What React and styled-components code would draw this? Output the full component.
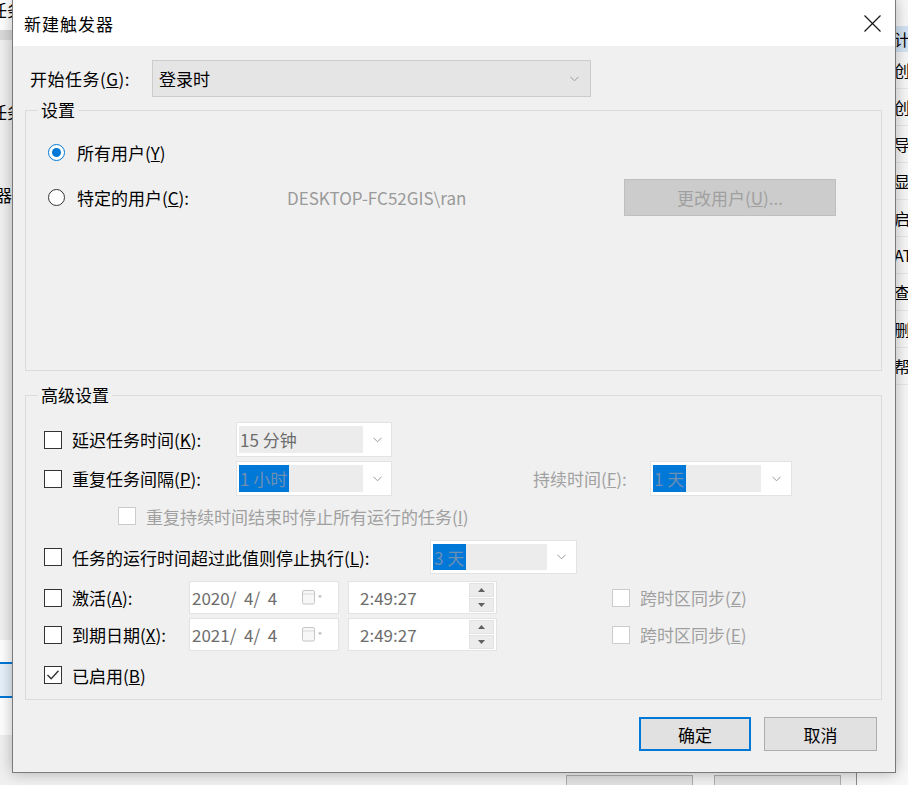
import React from 'react';
import styled, { createGlobalStyle } from 'styled-components';

const FONT = `"Noto Sans CJK SC", "Noto Sans", sans-serif`;

const GlobalStyle = createGlobalStyle`
  html, body {
    margin: 0;
    padding: 0;
    background: #f0f0f0;
  }
  * {
    box-sizing: border-box;
  }
`;

const Desktop = styled.div`
  position: relative;
  width: 908px;
  height: 785px;
  overflow: hidden;
  background: #f0f0f0;
  font-family: ${FONT};
  font-size: 17px;
  color: #000;
`;

/* main window action pane, mostly hidden behind the dialogs */
const ActionPane = styled.div`
  position: absolute;
  left: 857px;
  top: 0;
  width: 260px;
  height: 785px;
  background: #f7f7f7;
  padding-top: 26px;
  display: flex;
  flex-direction: column;
  font-size: 16px;
`;

const ActionItem = styled.div`
  height: ${p => (p.$header ? 26 : 37)}px;
  display: flex;
  align-items: center;
  padding-left: 37px;
  white-space: nowrap;
  background: ${p => (p.$header ? '#d3e3f3' : 'transparent')};
  border-bottom: 1px solid ${p => (p.$header ? 'transparent' : '#e6e6e6')};
`;

/* the "create task" dialog behind */
const BackDialog = styled.div`
  position: absolute;
  left: -200px;
  top: -40px;
  width: 1057px;
  height: 900px;
  background: #f0f0f0;
  border-right: 1px solid #8a8a8a;
  display: flex;
  flex-direction: column;
`;

const BackLine = styled.div`
  height: ${p => p.$h}px;
  flex: none;
  background: ${p => p.$bg || 'transparent'};
  padding-left: ${p => p.$indent || 190}px;
  padding-top: ${p => p.$pt || 0}px;
  line-height: 24px;
  white-space: nowrap;
`;

const BackPrimary = styled.div`
  width: 60px;
  height: 36px;
  margin-left: -20px;
  border: 2px solid #0078d7;
  background: #e5f1fb;
  display: flex;
  align-items: center;
  justify-content: flex-end;
  padding-right: 28px;
  white-space: nowrap;
`;

const BackButtons = styled.div`
  display: flex;
  justify-content: flex-end;
  gap: 21px;
  padding-right: 15px;
`;

const BackButton = styled.div`
  width: 127px;
  height: 34px;
  border: 1px solid #adadad;
  background: #e1e1e1;
  display: flex;
  align-items: center;
  justify-content: center;
`;

/* new trigger dialog */
const Dialog = styled.div`
  position: absolute;
  left: 12px;
  top: -1px;
  width: 884px;
  height: 774px;
  background: #f0f0f0;
  border: 1px solid #7a7a7a;
  box-shadow: 0 0 14px rgba(0, 0, 0, 0.28);
  display: flex;
  flex-direction: column;
`;

const TitleBar = styled.div`
  height: 46px;
  flex: none;
  background: #fff;
  display: flex;
  align-items: center;
  justify-content: space-between;
  padding-left: 11px;
`;

const Title = styled.div`
  font-size: 17px;
  letter-spacing: 1px;
`;

const CloseButton = styled.div`
  width: 46px;
  height: 46px;
  display: flex;
  align-items: center;
  justify-content: center;
`;

const Body = styled.div`
  flex: 1;
  display: flex;
  flex-direction: column;
  padding: 14px 13px 0 12px;
`;

const StartRow = styled.div`
  height: 37px;
  display: flex;
  align-items: center;
`;

const StartLabel = styled.div`
  width: 127px;
  padding-left: 5px;
  white-space: nowrap;
  letter-spacing: 0.5px;
`;

const Select = styled.div`
  width: 439px;
  height: 37px;
  background: #e5e5e5;
  border: 1px solid #cccccc;
  display: flex;
  align-items: center;
  justify-content: space-between;
  padding: 0 11px 0 6px;
`;

const Group = styled.fieldset`
  margin: ${p => p.$mt}px 0 0;
  padding: ${p => p.$pt}px 0 ${p => p.$pb}px 0;
  border: 1px solid #dcdcdc;
  min-width: 0;
`;

const GroupTitle = styled.legend`
  margin-left: 12px;
  padding: 0 3px;
  font-size: 17px;
  line-height: 24px;
`;

const Row = styled.div`
  height: ${p => p.$h}px;
  margin-top: ${p => p.$mt || 0}px;
  display: flex;
  align-items: center;
  padding-left: ${p => p.$pl || 18}px;
`;

const Radio = styled.span`
  width: 17px;
  height: 17px;
  flex: none;
  border-radius: 50%;
  border: 1px solid ${p => (p.$checked ? '#0078d7' : '#333')};
  background: #fff;
  display: flex;
  align-items: center;
  justify-content: center;

  &::after {
    content: '';
    width: 9px;
    height: 9px;
    border-radius: 50%;
    background: #0078d7;
    display: ${p => (p.$checked ? 'block' : 'none')};
  }
`;

const Label = styled.span`
  width: ${p => (p.$w ? `${p.$w}px` : 'auto')};
  flex: none;
  margin-left: ${p => (p.$ml === undefined ? 10 : p.$ml)}px;
  color: ${p => (p.$disabled ? '#a0a0a0' : '#000')};
  white-space: nowrap;
`;

const UserName = styled.span`
  width: 337px;
  flex: none;
  color: #9a9a9a;
  white-space: nowrap;
`;

const DisabledButton = styled.div`
  width: 212px;
  height: 37px;
  background: #cccccc;
  border: 1px solid #bfbfbf;
  color: #a0a0a0;
  display: flex;
  align-items: center;
  justify-content: center;
`;

const Check = styled.span`
  width: 18px;
  height: 18px;
  flex: none;
  margin-left: ${p => p.$ml || 0}px;
  border: 1px solid ${p => (p.$disabled ? '#cccccc' : '#333')};
  background: #fff;
  display: flex;
  align-items: center;
  justify-content: center;
`;

const Combo = styled.div`
  width: ${p => p.$w}px;
  height: ${p => p.$h}px;
  flex: none;
  margin-left: ${p => p.$ml || 0}px;
  background: #fff;
  border: 1px solid #e3e3e3;
  padding: 3px 0 3px 2px;
  display: flex;
`;

const ComboText = styled.div`
  width: ${p => p.$fw}px;
  background: #ececec;
  color: #6d6d6d;
  display: flex;
  align-items: stretch;
  padding-left: 1px;
  white-space: nowrap;
`;

const Selected = styled.span`
  display: flex;
  align-items: center;
  background: #0078d7;
  color: #6f8fb3;
  padding: 0 2px 0 1px;
  margin-left: -1px;
`;

const Plain = styled.span`
  display: flex;
  align-items: center;
`;

const ComboArrow = styled.div`
  flex: 1;
  display: flex;
  align-items: center;
  justify-content: center;
`;

const DateBox = styled.div`
  width: ${p => p.$w}px;
  height: 33px;
  flex: none;
  margin-left: ${p => p.$ml || 0}px;
  background: #fff;
  border: 1px solid #e3e3e3;
  display: flex;
  align-items: center;
  padding-left: ${p => p.$pl}px;
  padding-right: ${p => p.$pr}px;
  color: #6d6d6d;
  white-space: pre;
`;

const DateText = styled.span`
  flex: 1;
`;

const Spinner = styled.div`
  width: 25px;
  height: 29px;
  display: flex;
  flex-direction: column;
  gap: 1px;
`;

const SpinPart = styled.div`
  flex: 1;
  background: #ececec;
  border: 1px solid #e2e2e2;
  display: flex;
  align-items: center;
  justify-content: center;
`;

const Buttons = styled.div`
  margin-top: 17px;
  display: flex;
  justify-content: flex-end;
  gap: 13px;
  padding-right: 5px;
`;

const Button = styled.div`
  width: ${p => p.$w}px;
  height: 34px;
  background: #e1e1e1;
  border: ${p => (p.$primary ? '2px solid #0078d7' : '1px solid #adadad')};
  display: flex;
  align-items: center;
  justify-content: center;
`;

const Chevron = () => (
  <svg width="9" height="6" viewBox="0 0 9 6">
    <polyline points="0.5,0.8 4.5,4.8 8.5,0.8" fill="none" stroke="#9a9a9a" strokeWidth="1" />
  </svg>
);

const Tick = () => (
  <svg width="14" height="14" viewBox="0 0 14 14">
    <polyline points="1.5,7 5.2,10.8 12.5,2.8" fill="none" stroke="#333" strokeWidth="1.4" />
  </svg>
);

const CalendarIcon = () => (
  <svg width="22" height="15" viewBox="0 0 22 15">
    <rect x="0.5" y="0.5" width="12" height="13.5" rx="1.5" fill="#f7f7f7" stroke="#c6c6c6" />
    <line x1="1" y1="4" x2="12" y2="4" stroke="#dadada" />
    <polygon points="16,5.5 20,5.5 18,8" fill="#b3b3b3" />
  </svg>
);

const SpinArrow = ({ up }) => (
  <svg width="7" height="4" viewBox="0 0 7 4">
    <polygon points={up ? '0,4 7,4 3.5,0' : '0,0 7,0 3.5,4'} fill="#606060" />
  </svg>
);

const ComboBox = ({ w, h, fw, ml, value, selected }) => (
  <Combo $w={w} $h={h} $ml={ml}>
    <ComboText $fw={fw}>
      {selected ? <Selected>{value}</Selected> : <Plain>{value}</Plain>}
    </ComboText>
    <ComboArrow>
      <Chevron />
    </ComboArrow>
  </Combo>
);

const DateTime = ({ date }) => (
  <>
    <DateBox $w={150} $pl={2} $pr={14}>
      <DateText>{date}</DateText>
      <CalendarIcon />
    </DateBox>
    <DateBox $w={149} $ml={9} $pl={11} $pr={2}>
      <DateText>2:49:27</DateText>
      <Spinner>
        <SpinPart><SpinArrow up /></SpinPart>
        <SpinPart><SpinArrow /></SpinPart>
      </Spinner>
    </DateBox>
  </>
);

const actions = [
  '计划程序库', '创建基本任务...', '创建任务...', '导入任务...', '显示所有正在运行的任务',
  '启用所有任务历史记录', 'AT 服务帐户配置', '查看', '删除文件夹', '帮助'
];

export default function App() {
  return (
    <Desktop>
      <GlobalStyle />

      <ActionPane>
        {actions.map((a, i) => (
          <ActionItem key={a} $header={i === 0}>{a}</ActionItem>
        ))}
      </ActionPane>

      <BackDialog>
        <BackLine $h={70} $bg="#fff" $pt={38}>任务</BackLine>
        <BackLine $h={10} $bg="#dadada" />
        <BackLine $h={60} />
        <BackLine $h={26}>任务</BackLine>
        <BackLine $h={57} />
        <BackLine $h={26} $indent={195}>器</BackLine>
        <BackLine $h={431} />
        <BackLine $h={95} $bg="#fff" $pt={22} $indent={180}>
          <BackPrimary>创建(</BackPrimary>
        </BackLine>
        <BackLine $h={40} />
        <BackButtons>
          <BackButton>确定</BackButton>
          <BackButton>取消</BackButton>
        </BackButtons>
      </BackDialog>

      <Dialog>
        <TitleBar>
          <Title>新建触发器</Title>
          <CloseButton>
            <svg width="17" height="17" viewBox="0 0 17 17">
              <line x1="0.5" y1="0.5" x2="16.5" y2="16.5" stroke="#111" strokeWidth="1.1" />
              <line x1="16.5" y1="0.5" x2="0.5" y2="16.5" stroke="#111" strokeWidth="1.1" />
            </svg>
          </CloseButton>
        </TitleBar>

        <Body>
          <StartRow>
            <StartLabel>开始任务(<u>G</u>):</StartLabel>
            <Select>
              <span>登录时</span>
              <Chevron />
            </Select>
          </StartRow>

          <Group $mt={1} $pt={15} $pb={154}>
            <GroupTitle>设置</GroupTitle>
            <Row $h={30} $pl={22}>
              <Radio $checked />
              <Label $ml={12}>所有用户(<u>Y</u>)</Label>
            </Row>
            <Row $h={37} $mt={12} $pl={22}>
              <Radio />
              <Label $ml={12} $w={210}>特定的用户(<u>C</u>):</Label>
              <UserName>DESKTOP-FC52GIS\ran</UserName>
              <DisabledButton>更改用户(<u>U</u>)...</DisabledButton>
            </Row>
          </Group>

          <Group $mt={12} $pt={15} $pb={8}>
            <GroupTitle>高级设置</GroupTitle>
            <Row $h={35}>
              <Check />
              <Label $w={164}>延迟任务时间(<u>K</u>):</Label>
              <ComboBox w={156} h={35} fw={124} value="15 分钟" />
            </Row>
            <Row $h={35} $mt={4}>
              <Check />
              <Label $w={164}>重复任务间隔(<u>P</u>):</Label>
              <ComboBox w={156} h={35} fw={124} value="1 小时" selected />
              <Label $w={117} $ml={141} $disabled>持续时间(<u>F</u>):</Label>
              <ComboBox w={142} h={35} fw={108} value="1 天" selected />
            </Row>
            <Row $h={34} $mt={3}>
              <Check $disabled $ml={74} />
              <Label $disabled>重复持续时间结束时停止所有运行的任务(<u>I</u>)</Label>
            </Row>
            <Row $h={34} $mt={7}>
              <Check />
              <Label $w={358}>任务的运行时间超过此值则停止执行(<u>L</u>):</Label>
              <ComboBox w={147} h={34} fw={114} value="3 天" selected />
            </Row>
            <Row $h={33} $mt={7}>
              <Check />
              <Label $w={117}>激活(<u>A</u>):</Label>
              <DateTime date="2020/  4/  4" />
              <Check $disabled $ml={115} />
              <Label $disabled>跨时区同步(<u>Z</u>)</Label>
            </Row>
            <Row $h={33} $mt={4}>
              <Check />
              <Label $w={117}>到期日期(<u>X</u>):</Label>
              <DateTime date="2021/  4/  4" />
              <Check $disabled $ml={115} />
              <Label $disabled>跨时区同步(<u>E</u>)</Label>
            </Row>
            <Row $h={32} $mt={8}>
              <Check>
                <Tick />
              </Check>
              <Label>已启用(<u>B</u>)</Label>
            </Row>
          </Group>

          <Buttons>
            <Button $w={112} $primary>确定</Button>
            <Button $w={113}>取消</Button>
          </Buttons>
        </Body>
      </Dialog>
    </Desktop>
  );
}
